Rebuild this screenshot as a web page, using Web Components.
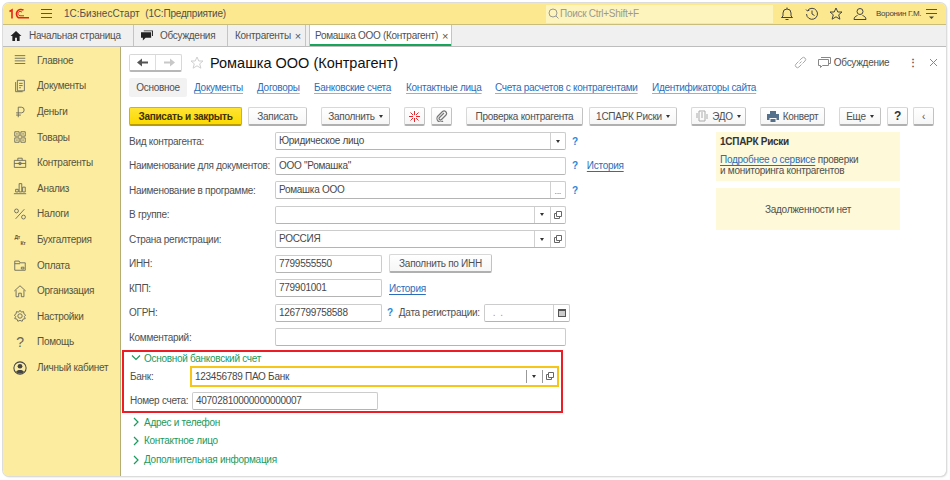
<!DOCTYPE html>
<html lang="ru">
<head>
<meta charset="utf-8">
<title>1С:БизнесСтарт</title>
<style>
    html, body { margin: 0; padding: 0; background: #fff; }
    body { width: 950px; height: 480px; overflow: hidden; font: 10px "Liberation Sans", Arial, sans-serif; letter-spacing: -.28px; color: #505050; }
</style>
</head>
<body>
<app-window>
    <app-header slot="header"></app-header>
    <app-tabs slot="tabs">
        <app-tab home width="131">Начальная страница</app-tab>
        <app-tab chat width="94">Обсуждения</app-tab>
        <app-tab closable width="78">Контрагенты</app-tab>
        <app-tab closable active width="143">Ромашка ООО (Контрагент)</app-tab>
    </app-tabs>
    <app-sidebar slot="sidebar">
        <nav-item icon="menu">Главное</nav-item>
        <nav-item icon="docs">Документы</nav-item>
        <nav-item icon="rub">Деньги</nav-item>
        <nav-item icon="goods">Товары</nav-item>
        <nav-item icon="case">Контрагенты</nav-item>
        <nav-item icon="chart">Анализ</nav-item>
        <nav-item icon="pct">Налоги</nav-item>
        <nav-item icon="dk">Бухгалтерия</nav-item>
        <nav-item icon="pay">Оплата</nav-item>
        <nav-item icon="house">Организация</nav-item>
        <nav-item icon="gear">Настройки</nav-item>
        <nav-item icon="help">Помощь</nav-item>
        <nav-item icon="user">Личный кабинет</nav-item>
    </app-sidebar>
    <contractor-form slot="main"></contractor-form>
</app-window>

<script>
// small svg helpers, every icon is stroked on a 16x16 box unless noted
const ICONS = {
    menu: '<path d="M2 3h12M2 6h12M2 9h12M2 12h12" stroke-width="1"/>',
    docs: '<path d="M5 1.5h8v12H5z"/><path d="M3 3.5v11h8"/><path d="M7 5h4M7 7.5h4M7 10h2"/>',
    rub: '<path d="M6 14V2.5h3.5a3.2 3.2 0 0 1 0 6.5H3.5M3.5 11.5H9"/>',
    goods: '<path d="M2 2h5v5H2zM9 2h5v5H9zM2 9h5v5H2zM9 9h5v5H9z"/><path d="M3.5 4.5h2M10.5 4.5h2M3.5 11.5h2M10.5 11.5h2"/>',
    case: '<path d="M1.5 5h13v8h-13z"/><path d="M5.5 5V2.5h5V5M1.5 8.5h13"/><circle cx="8" cy="8.5" r="1.5"/>',
    chart: '<path d="M1 14.5h14"/><path d="M3 12.5h3v-3H3zM7 12.5h3V3H7zM11 12.5h3V7h-3z"/>',
    pct: '<path d="M13 2.5L3 13.5"/><circle cx="4" cy="4.5" r="2.2"/><circle cx="12" cy="11.5" r="2.2"/>',
    pay: '<path d="M2 3.5h5l1 2h6v8.5H2z"/><path d="M2 6.5h6"/><path d="M9.5 10.5h3v2h-3z"/>',
    house: '<path d="M1.5 8L8 2l6.5 6"/><path d="M3.5 7v7.5h3v-4h3v4h3V7"/>',
    gear: '<circle cx="8" cy="8" r="2.5"/><path d="M8 1.5l1.5 2 2.5-.5.5 2.5 2 1.5-1.5 1.5 1 2.5-2.5.5-1 2.5-2.5-1-2.5 1-1-2.5-2.5-.5 1-2.5L1.5 7l2-1.5.5-2.5 2.5.5z"/>'
}

function icon (name) {
    if (name === 'help') return '<span class="glyph">?</span>'
    if (name === 'dk') return '<span class="dk"><b>Дт</b><b>Кт</b></span>'
    if (name === 'user') {
        return `<svg viewBox="0 0 16 16" width="14" height="14"><circle cx="8" cy="8" r="7" fill="none" stroke="#444" stroke-width="1.2"/>
            <circle cx="8" cy="6" r="2.7" fill="#444"/><path d="M3.5 12.5c1-3 8-3 9 0a6.5 6.5 0 0 1-9 0z" fill="#444"/></svg>`
    }
    return `<svg viewBox="0 0 16 16" width="14" height="14" fill="none" stroke="#66665a" stroke-width="1">${ICONS[name]}</svg>`
}

class AppWindow extends HTMLElement {
    constructor () {
        super()
        this.attachShadow({ mode: 'open' })
        this.shadowRoot.innerHTML = `
            <style>
                :host {
                    display: grid;
                    width: 943px;
                    height: 473px;
                    margin: 3px 0 0 3px;
                    grid-template-columns: 118px 1fr;
                    grid-template-rows: 22px 22px 1fr;
                    border-radius: 6px;
                    box-shadow: 0 0 0 1px #dcdcdc, 1px 1px 2px #ccc;
                    overflow: hidden;
                    box-sizing: border-box;
                }
                .wide { grid-column: 1 / 3; }
            </style>
            <div class="wide"><slot name="header"></slot></div>
            <div class="wide"><slot name="tabs"></slot></div>
            <slot name="sidebar"></slot>
            <slot name="main"></slot>`
    }
}

class AppHeader extends HTMLElement {
    constructor () {
        super()
        this.attachShadow({ mode: 'open' })
        this.shadowRoot.innerHTML = `
            <style>
                :host {
                    display: flex;
                    align-items: center;
                    height: 22px;
                    box-sizing: border-box;
                    background: #fbe88f;
                    border-bottom: 1px solid #c9bd7c;
                    color: #505050;
                }
                .logo { margin-left: 6px; width: 20px; height: 11px; color: #e2231a; flex: none; }
                .burger { margin-left: 12px; flex: none; }
                .app { margin-left: 12px; width: 482px; white-space: nowrap; flex: none; letter-spacing: 0; }
                .app span { margin-left: 3px; letter-spacing: -.2px; }
                .search {
                    width: 227px;
                    height: 18px;
                    background: #fdf3bd;
                    display: flex;
                    align-items: center;
                    gap: 1px;
                    padding-left: 2px;
                    box-sizing: border-box;
                    color: #9a9a90;
                    flex: none;
                }
                .icons { display: flex; align-items: center; margin-left: 7px; }
                .user { font-size: 8px; margin-left: 9px; color: #444; white-space: nowrap; width: 50px; flex: none; }
                svg { display: block; }
            </style>
            <svg class="logo" viewBox="0 0 20 11" fill="none" stroke="currentColor" stroke-width="1.6">
                <path d="M.5 3.5L3 2v8.500"/>
                <path d="M14.500 2.200A4.400 4.400 0 1 0 9.500 9.800H20"/>
                <path d="M13 4.300A2.200 2.200 0 1 0 11 7.800H15" stroke-width="1"/>
            </svg>
            <svg class="burger" width="11" height="11" viewBox="0 0 11 11" stroke="#555" stroke-width="1"><path d="M0 1.500h11M0 5.500h11M0 9.500h11"/></svg>
            <div class="app">1С:БизнесСтарт <span>(1С:Предприятие)</span></div>
            <div class="search">
                <svg width="11" height="11" viewBox="0 0 11 11" fill="none" stroke="#9a9a90"><circle cx="5" cy="5" r="4"/><path d="M8 8l2.500 2.500"/></svg>
                <span>Поиск Ctrl+Shift+F</span>
            </div>
            <div class="icons">
                <svg width="14" height="14" viewBox="0 0 14 14" fill="none" stroke="#444"><path d="M1.500 10.500h11L11 9V6a4 4 0 0 0-8 0v3zM7 2V.5M5.500 12.500h3"/></svg>
                <svg width="14" height="14" viewBox="0 0 14 14" fill="none" stroke="#444" style="margin-left:11px"><path d="M2.600 3.500A5.500 5.500 0 1 1 1.500 7M1 2.500l1.500 1.500L4.500 3M7 3.500V7l2.500 1.500"/></svg>
                <svg width="14" height="14" viewBox="0 0 14 14" fill="none" stroke="#444" style="margin-left:10px"><path d="M7 1l1.800 4h4.200l-3.300 2.800 1.200 4.400L7 9.800l-3.900 2.400 1.200-4.400L1 5h4.200z"/></svg>
                <svg width="14" height="14" viewBox="0 0 14 14" fill="none" stroke="#444" style="margin-left:10px"><circle cx="7" cy="4.500" r="3"/><path d="M1 12.500c0-2.500 2-3.500 3.500-4M13 12.500c0-2.500-2-3.500-3.500-4M1 12.500h12"/></svg>
                <span class="user">Воронин Г.М.</span>
                <svg width="11" height="12" viewBox="0 0 11 12" stroke="#555"><path d="M0 1.500h11M0 5.500h11"/><path d="M3 8.500h5L5.500 11z" fill="#444" stroke="none"/></svg>
            </div>`
    }
}

class AppTabs extends HTMLElement {
    constructor () {
        super()
        this.attachShadow({ mode: 'open' })
        this.shadowRoot.innerHTML = `
            <style>
                :host {
                    display: flex;
                    height: 22px;
                    box-sizing: border-box;
                    background: #f0f0f0;
                    border-bottom: 1px solid #bdbdbd;
                }
            </style>
            <slot></slot>`
    }
}

class AppTab extends HTMLElement {
    constructor () {
        super()
        this.attachShadow({ mode: 'open' })
        const close = this.hasAttribute('closable') ? '<span class="x">×</span>' : ''
        let pic = ''
        if (this.hasAttribute('home')) {
            pic = '<svg width="12" height="10" viewBox="0 0 12 11" fill="#222"><path d="M6 0L0 5.500h2V11h3V7.500h2V11h3V5.500h2z"/></svg>'
        }
        if (this.hasAttribute('chat')) {
            pic = '<svg width="12" height="11" viewBox="0 0 13 11" fill="#222"><path d="M3 0h10v6h-1V1H3z"/><path d="M0 2h11v6H5l-3 3V8H0z"/></svg>'
        }
        this.shadowRoot.innerHTML = `
            <style>
                :host {
                    display: flex;
                    align-items: center;
                    gap: 5px;
                    height: 21px;
                    box-sizing: border-box;
                    padding-left: 7px;
                    border-right: 1px solid #c4c4c4;
                    white-space: nowrap;
                    color: #505050;
                    width: ${this.getAttribute('width')}px;
                    flex: none;
                }
                :host([active]) {
                    margin-left: 3px;
                    padding-left: 5px;
                    background: linear-gradient(#19a45c, #19a45c) no-repeat 0 19px / 100% 2px, #fff;
                    border-left: 1px solid #c4c4c4;
                }
                :host([closable]) { gap: 4px; }
                .x { color: #555; font-size: 11px; }
                svg { flex: none; margin-right: 2px; }
            </style>
            ${pic}<slot></slot>${close}`
    }
}

class AppSidebar extends HTMLElement {
    constructor () {
        super()
        this.attachShadow({ mode: 'open' })
        this.shadowRoot.innerHTML = `
            <style>
                :host {
                    display: block;
                    box-sizing: border-box;
                    background: #fbeca0;
                    border-right: 1px solid #b6ad72;
                    padding-top: .6px;
                }
            </style>
            <slot></slot>`
    }
}

class NavItem extends HTMLElement {
    constructor () {
        super()
        this.attachShadow({ mode: 'open' })
        this.shadowRoot.innerHTML = `
            <style>
                :host {
                    display: flex;
                    align-items: center;
                    height: 25.6px;
                    color: #55553f;
                }
                .pic { width: 14px; height: 15px; margin-left: 10px; margin-right: 10px; display: flex; align-items: center; justify-content: center; }
                .glyph { font-size: 14px; color: #66665a; }
                .dk { display: flex; flex-direction: column; font-size: 5px; line-height: 6px; }
                .dk b:last-child { margin-left: 6px; }
                svg { display: block; }
            </style>
            <span class="pic">${icon(this.getAttribute('icon'))}</span><slot></slot>`
    }
}

class UiButton extends HTMLElement {
    constructor () {
        super()
        this.attachShadow({ mode: 'open' })
        this.shadowRoot.innerHTML = `
            <style>
                :host {
                    display: inline-flex;
                    align-items: center;
                    justify-content: center;
                    gap: 4px;
                    height: 19px;
                    box-sizing: border-box;
                    background: linear-gradient(#fff, #f6f6f6);
                    border: 1px solid #d8d8d8;
                    border-bottom: 2px solid #b0b0b0;
                    border-right-color: #c2c2c2;
                    border-radius: 2px;
                    white-space: nowrap;
                    color: #505050;
                    flex: none;
                }
                :host([primary]) {
                    background: linear-gradient(#ffe433, #fbd900);
                    border-color: #d6b500;
                    border-bottom-color: #b89c00;
                    color: #3d3200;
                    font-weight: bold;
                }
                :host([menu])::after {
                    content: "";
                    border: 2px solid transparent;
                    border-top: 3px solid #333;
                    border-bottom-width: 0;
                    margin-top: 1px;
                }
            </style>
            <slot></slot>`
    }
}

class FormField extends HTMLElement {
    constructor () {
        super()
        this.attachShadow({ mode: 'open' })
        const drop = this.hasAttribute('drop') ? '<span class="cell"><i class="tri"></i></span>' : ''
        const open = this.hasAttribute('open') ? `<span class="cell"><svg width="8" height="8" viewBox="0 0 8 8" fill="none" stroke="#666"><path d="M2.500 .5h5v5h-5z"/><path d="M2.500 2.500h-2v5h5v-2"/></svg></span>` : ''
        const pick = this.hasAttribute('pick') ? '<span class="cell dots">...</span>' : ''
        const date = this.hasAttribute('date') ? `<span class="cell"><svg width="8" height="9" viewBox="0 0 8 9" fill="#555"><path d="M0 1h8v8H0z"/><path d="M1 3h6v5H1z" fill="#ccc"/></svg></span>` : ''
        this.shadowRoot.innerHTML = `
            <style>
                :host {
                    display: flex;
                    height: 18px;
                    box-sizing: border-box;
                    background: #fff;
                    border: 1px solid #cccccc;
                    border-bottom: 1.5px solid #b4b4b4;
                    border-radius: 2px;
                    color: #484848;
                    flex: none;
                }
                :host([focused]) {
                    border: 2px solid #f5c518;
                    border-radius: 0;
                    height: 21px;
                }
                .value { flex: 1; padding-left: 3px; line-height: 15px; white-space: pre; overflow: hidden; }
                :host([focused]) .value { line-height: 17px; padding-left: 3px; }
                :host([focused]) .cell { border-color: #999; margin: 2px 0; }
                .cell { width: 14.5px; border-left: 1px solid #d0d0d0; display: flex; align-items: center; justify-content: center; flex: none; }
                .dots { align-items: flex-end; color: #777; font-size: 9px; line-height: 13px; }
                .tri { border: 2px solid transparent; border-top: 3px solid #333; border-bottom-width: 0; }
            </style>
            <span class="value"><slot></slot></span>${pick}${drop}${open}${date}`
    }
}

class FormRow extends HTMLElement {
    constructor () {
        super()
        this.attachShadow({ mode: 'open' })
        this.shadowRoot.innerHTML = `
            <style>
                :host {
                    display: flex;
                    align-items: center;
                    height: 24.5px;
                    white-space: nowrap;
                }
                .label { width: 146px; flex: none; color: #505050; }
                .rest { display: flex; align-items: center; flex: 1; }
            </style>
            <span class="label"><slot name="label"></slot></span>
            <div class="rest"><slot></slot></div>`
    }
}

class CollapseGroup extends HTMLElement {
    constructor () {
        super()
        this.attachShadow({ mode: 'open' })
        const d = this.hasAttribute('open') ? 'M1 2.500l4 4 4-4' : 'M3 1l4 4-4 4'
        this.shadowRoot.innerHTML = `
            <style>
                :host {
                    display: flex;
                    align-items: center;
                    gap: 3px;
                    height: 18.7px;
                    color: #1a9a5c;
                    padding-left: 9px;
                }
                svg { flex: none; }
            </style>
            <svg width="10" height="10" viewBox="0 0 10 10" fill="none" stroke="#1a9a5c" stroke-width="1.2"><path d="${d}"/></svg>
            <slot></slot>`
    }
}

class ContractorForm extends HTMLElement {
    constructor () {
        super()
        this.attachShadow({ mode: 'open' })
        this.shadowRoot.innerHTML = `
            <style>
                :host { display: block; background: #fff; position: relative; padding: 7px 0 0 8px; overflow: hidden; }
                a { color: #2a6ebb; text-decoration: underline; text-underline-offset: 1.5px; }
                .title-row { display: flex; align-items: center; height: 17px; }
                .arrows { display: flex; width: 53px; height: 18px; box-sizing: border-box; border: 1px solid #d8d8d8; border-bottom: 2px solid #b8b8b8; border-radius: 2px; flex: none; }
                .arrows span { flex: 1; display: flex; align-items: center; justify-content: center; }
                .arrows span + span { border-left: 1px solid #ddd; }
                .star { margin-left: 8px; flex: none; }
                h1 { font: 14.5px "Liberation Sans", Arial, sans-serif; letter-spacing: 0; color: #111; margin: 0 0 0 6px; flex: 1; }
                .side { display: flex; align-items: center; margin-right: 8px; color: #505050; }
                .links { display: flex; align-items: center; height: 19px; margin-top: 7px; }
                .links span.on { background: #f2f2f2; height: 19px; width: 58px; display: flex; align-items: center; justify-content: center; border-radius: 2px; margin-right: 7px; flex: none; }
                .links a { white-space: nowrap; color: #2a6ebb; text-decoration-color: #8ab4e0; flex: none; }
                .toolbar { display: flex; align-items: center; gap: 6px; margin-top: 10px; height: 19px; }
                .rows { margin-top: 3px; width: 437px; }
                .q { color: #2b87d8; font-weight: bold; margin-left: 6px; font-size: 10px; }
                .hist { margin-left: 9px; }
                .side-panel { position: absolute; left: 595px; top: 85px; width: 184px; }
                .info { background: #fef9d9; box-sizing: border-box; color: #505050; }
                .info.a { height: 49px; padding: 4px 4px; line-height: 11px; }
                .info.a b { display: block; color: #333; margin-bottom: 6px; line-height: 12px; }
                .info.b { height: 42px; margin-top: 7px; display: flex; align-items: center; justify-content: center; }
                .bank {
                    position: relative;
                    left: -7px;
                    width: 441px;
                    height: 63px;
                    box-sizing: border-box;
                    border: 2px solid #ee1c25;
                    background: #fff;
                }
                .bank collapse-group { height: 13px; padding-left: 7px; }
                .bank-row { display: flex; align-items: center; padding-left: 6px; color: #505050; white-space: nowrap; }
                .bank-row span { flex: none; }
                .rest { margin-left: -7px; margin-top: .4px; }
            </style>
            <div class="title-row">
                <div class="arrows">
                    <span><svg width="12" height="9" viewBox="0 0 12 9" fill="#555"><path d="M0 4.500L5 .5v3h6v2H5v3z"/></svg></span>
                    <span><svg width="12" height="9" viewBox="0 0 12 9" fill="#c8c8c8"><path d="M12 4.500L7 .5v3H1v2h6v3z"/></svg></span>
                </div>
                <svg class="star" width="14" height="14" viewBox="0 0 14 14" fill="none" stroke="#cfcfcf"><path d="M7 1l1.800 4h4.200l-3.300 2.800 1.200 4.400L7 9.800l-3.900 2.400 1.200-4.400L1 5h4.200z"/></svg>
                <h1>Ромашка ООО (Контрагент)</h1>
                <div class="side">
                    <svg width="13" height="13" viewBox="0 0 13 13" fill="none" stroke="#aaa"><path d="M5.500 7.500l2-2M4.500 5.500l-2.500 2.500a2 2 0 0 0 3 3l2.500-2.500M8.500 7.500l2.500-2.500a2 2 0 0 0-3-3L5.500 4.500"/></svg>
                    <svg style="margin-left:11px" width="13" height="12" viewBox="0 0 13 12" fill="none" stroke="#888"><path d="M3 .5h9.500v6h-2"/><path d="M.5 2.500h10v6h-6l-2 2v-2h-2z"/></svg>
                    <span style="margin-left:3px">Обсуждение</span>
                    <span style="margin-left:19px;font-weight:bold;color:#555">⋮</span>
                    <svg style="margin-left:11px" width="9" height="9" viewBox="0 0 9 9" stroke="#888"><path d="M1 1l7 7M8 1l-7 7"/></svg>
                </div>
            </div>
            <div class="links">
                <span class="on">Основное</span>
                <a style="width:63px">Документы</a>
                <a style="width:57px">Договоры</a>
                <a style="width:92px">Банковские счета</a>
                <a style="width:89px">Контактные лица</a>
                <a style="width:157px">Счета расчетов с контрагентами</a>
                <a>Идентификаторы сайта</a>
            </div>
            <div class="toolbar">
                <ui-button primary style="width:113px">Записать и закрыть</ui-button>
                <ui-button style="width:59px">Записать</ui-button>
                <ui-button menu style="width:69px;margin-left:8px">Заполнить</ui-button>
                <ui-button style="width:21px;margin-left:8px"><svg width="11" height="11" viewBox="0 0 11 11" stroke="#e8262c"><path d="M5.500 0v4M5.500 7v4M0 5.500h4M7 5.500h4M1.500 1.500l2.500 2.500M7 7l2.500 2.500M9.500 1.500L7 4M4 7L1.500 9.500"/></svg></ui-button>
                <ui-button style="width:21px"><svg width="12" height="12" viewBox="0 0 12 12" fill="none" stroke="#777" stroke-width="1.2"><path d="M8 3L3.500 7.500a1.200 1.200 0 0 0 2 2L10 5a2.500 2.500 0 0 0-3.500-3.500L2 6a3.500 3.500 0 0 0 5 5"/></svg></ui-button>
                <ui-button style="width:117px;margin-left:8px">Проверка контрагента</ui-button>
                <ui-button menu style="width:88px">1СПАРК Риски</ui-button>
                <ui-button menu style="width:55px;margin-left:8px"><svg width="12" height="12" viewBox="0 0 12 12" fill="none" stroke="#aaa"><path d="M3 1h6v10H3z"/><path d="M5 3h2M5 5h2M5 7h2"/><path d="M1 3v5M11 4v5"/></svg>ЭДО</ui-button>
                <ui-button style="width:65px;margin-left:8px"><svg width="12" height="11" viewBox="0 0 12 11" fill="#55708a"><path d="M3 0h6v3H3zM0 3h12v6H9.500V7h-7v2H0z"/><path d="M3.500 8h5v3h-5z"/></svg>Конверт</ui-button>
                <ui-button menu style="width:42px;margin-left:8px">Еще</ui-button>
                <ui-button style="width:21px;font-weight:bold;color:#333;font-size:12px">?</ui-button>
                <ui-button style="width:21px;margin-left:-1px">‹</ui-button>
            </div>
            <div class="rows">
                <form-row><span slot="label">Вид контрагента:</span><form-field drop style="width:291px">Юридическое лицо</form-field><span class="q">?</span></form-row>
                <form-row><span slot="label">Наименование для документов:</span><form-field style="width:291px">ООО "Ромашка"</form-field><span class="q">?</span><a class="hist">История</a></form-row>
                <form-row><span slot="label">Наименование в программе:</span><form-field pick style="width:291px">Ромашка ООО</form-field><span class="q">?</span></form-row>
                <form-row><span slot="label">В группе:</span><form-field drop open style="width:291px"></form-field></form-row>
                <form-row><span slot="label">Страна регистрации:</span><form-field drop open style="width:291px">РОССИЯ</form-field></form-row>
                <form-row><span slot="label">ИНН:</span><form-field style="width:107px">7799555550</form-field><ui-button style="width:103px;margin-left:7px">Заполнить по ИНН</ui-button></form-row>
                <form-row><span slot="label">КПП:</span><form-field style="width:107px">779901001</form-field><a style="margin-left:7px">История</a></form-row>
                <form-row><span slot="label">ОГРН:</span><form-field style="width:107px">1267799758588</form-field><span class="q" style="margin-left:5px">?</span><span style="margin-left:6px;width:85px">Дата регистрации:</span><form-field date style="width:86px;color:#999">  .  .</form-field></form-row>
                <form-row><span slot="label">Комментарий:</span><form-field style="width:291px"></form-field></form-row>
            </div>
            <div class="bank">
                <collapse-group open>Основной банковский счет</collapse-group>
                <div class="bank-row" style="margin-top:1px"><span style="width:60px">Банк:</span><form-field focused drop open style="width:369px">123456789 ПАО Банк</form-field></div>
                <div class="bank-row" style="margin-top:5px"><span style="width:62px">Номер счета:</span><form-field style="width:186px">40702810000000000007</form-field></div>
            </div>
            <div class="rest">
                <collapse-group>Адрес и телефон</collapse-group>
                <collapse-group>Контактное лицо</collapse-group>
                <collapse-group>Дополнительная информация</collapse-group>
            </div>
            <div class="side-panel">
                <div class="info a"><b>1СПАРК Риски</b><a>Подробнее о сервисе</a> проверки<br>и мониторинга контрагентов</div>
                <div class="info b">Задолженности нет</div>
            </div>`
    }
}

customElements.define('app-window', AppWindow)
customElements.define('app-header', AppHeader)
customElements.define('app-tabs', AppTabs)
customElements.define('app-tab', AppTab)
customElements.define('app-sidebar', AppSidebar)
customElements.define('nav-item', NavItem)
customElements.define('ui-button', UiButton)
customElements.define('form-field', FormField)
customElements.define('form-row', FormRow)
customElements.define('collapse-group', CollapseGroup)
customElements.define('contractor-form', ContractorForm)
</script>
</body>
</html>
